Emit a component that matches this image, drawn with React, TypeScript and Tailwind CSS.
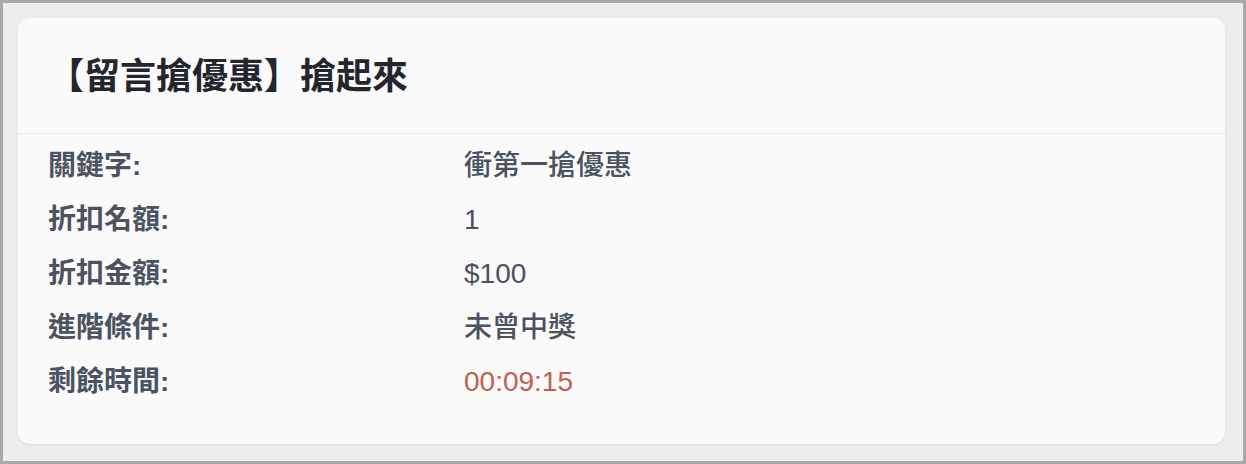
const rows = [
  { label: '關鍵字:', value: '衝第一搶優惠' },
  { label: '折扣名額:', value: '1' },
  { label: '折扣金額:', value: '$100' },
  { label: '進階條件:', value: '未曾中獎' },
  { label: '剩餘時間:', value: '00:09:15', highlight: true },
];

export default function App() {
  return (
    <div
      className="w-[1246px] h-[464px] border-[3px] border-[#a9a9a9] bg-[#ededef] pt-[15px] pl-[15px] pr-[18px]"
      style={{ fontFamily: '"Liberation Sans", "Noto Sans CJK TC", sans-serif' }}
    >
      <div className="h-[426px] rounded-[12px] bg-[#fafafa] shadow-[0_1px_3px_rgba(0,0,0,0.08)]">
        {/* Header */}
        <div className="h-[116px] flex items-center px-[30px] pt-[2px] border-b border-[#e9e9eb]">
          <h1 className="text-[36px] font-bold text-[#24262e] leading-none">
            【留言搶優惠】搶起來
          </h1>
        </div>

        {/* Details */}
        <div className="px-[30px] pt-[5px]">
          {rows.map(row => (
            <div key={row.label} className="flex h-[54px] items-center text-[28px]">
              <span className="w-[416px] shrink-0 font-semibold text-[#4b5260]">
                {row.label}
              </span>
              <span
                className={
                  row.highlight
                    ? 'font-medium text-[#c2604f]'
                    : 'font-medium text-[#4b5260]'
                }
              >
                {row.value}
              </span>
            </div>
          ))}
        </div>
      </div>
    </div>
  );
}
